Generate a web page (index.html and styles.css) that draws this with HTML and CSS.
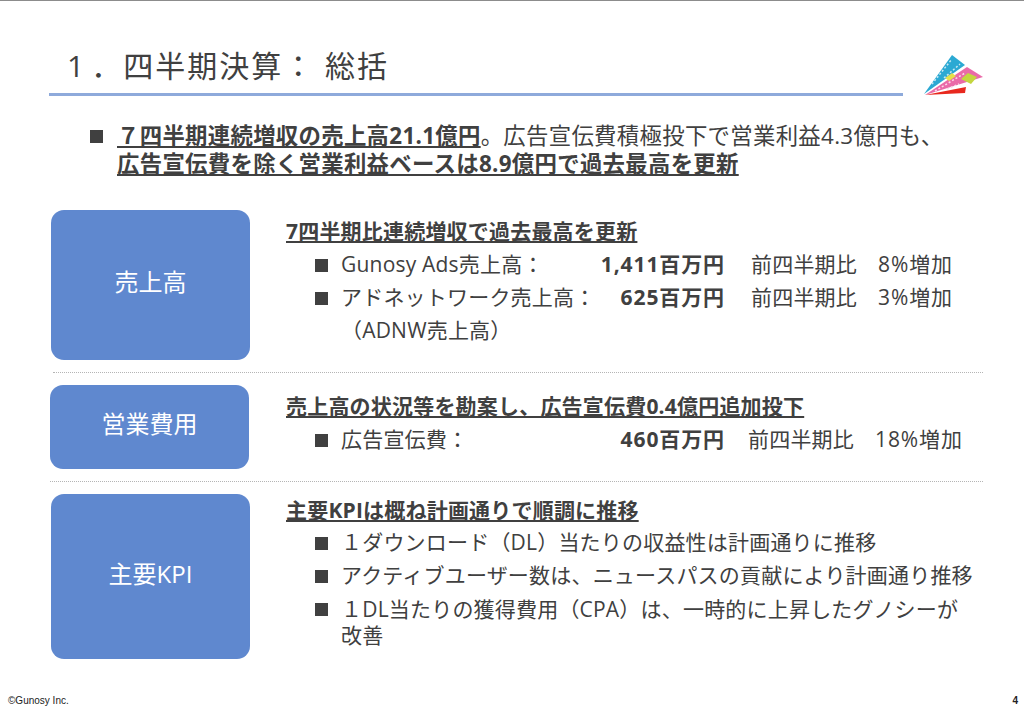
FILE: index.html
```html
<!DOCTYPE html>
<html lang="ja">
<head>
<meta charset="utf-8">
<title>四半期決算</title>
<link rel="stylesheet" href="styles.css">
</head>
<body>
<div class="slide">
  <header class="head">
    <h1 class="title"><span class="num">1</span>．四半期決算： 総括</h1>
    <svg class="logo" width="64" height="44" viewBox="0 0 64 44">
      <polygon points="1,40 29,1 42,11" fill="#2ba9d3"/>
      <polygon points="2,41 44,13 60,23" fill="#ea6aa8"/>
      <polygon points="2,41 43,33 42,39" fill="#e8281e"/>
      <polygon points="22,24 29,19 33,22 26,27" fill="#e6e04a"/>
      <polygon points="38,25 45,19 54,23 48,30" fill="#c4d63f"/>
      <path d="M9,30 L29,5 M21,24 L37,10" stroke="#c9e8f3" stroke-width="1.5" stroke-dasharray="2 2" fill="none"/>
      <path d="M12,37 L42,19 M24,35 L36,30" stroke="#fbdcea" stroke-width="1.5" stroke-dasharray="2 2" fill="none"/>
    </svg>
  </header>
  <div class="rule"></div>

  <div class="lead">
    <span class="sq"></span>
    <p class="lead-text"><span class="strong">７四半期連続増収の売上高21.1億円</span>。広告宣伝費積極投下で営業利益4.3億円も、<br><span class="strong">広告宣伝費を除く営業利益ベースは8.9億円で過去最高を更新</span></p>
  </div>

  <section class="row row-a">
    <div class="box box-a">売上高</div>
    <div class="body">
      <h2 class="sub">7四半期比連続増収で過去最高を更新</h2>
      <div class="item metric">
        <span class="sq"></span><span class="name">Gunosy Ads売上高：</span><b class="val">1,411百万円</b><span class="cmp">前四半期比</span><span class="pct">8%増加</span>
      </div>
      <div class="item metric">
        <span class="sq"></span><span class="name">アドネットワーク売上高：</span><b class="val">625百万円</b><span class="cmp">前四半期比</span><span class="pct">3%増加</span>
      </div>
      <div class="item cont">（ADNW売上高）</div>
    </div>
  </section>
  <div class="sep sep-a"></div>

  <section class="row row-b">
    <div class="box box-b">営業費用</div>
    <div class="body">
      <h2 class="sub">売上高の状況等を勘案し、広告宣伝費0.4億円追加投下</h2>
      <div class="item metric metric-b">
        <span class="sq"></span><span class="name">広告宣伝費：</span><b class="val">460百万円</b><span class="cmp">前四半期比</span><span class="pct">18%増加</span>
      </div>
    </div>
  </section>
  <div class="sep"></div>

  <section class="row row-c">
    <div class="box box-c">主要KPI</div>
    <div class="body">
      <h2 class="sub">主要KPIは概ね計画通りで順調に推移</h2>
      <div class="item"><span class="sq"></span><span>１ダウンロード（DL）当たりの収益性は計画通りに推移</span></div>
      <div class="item"><span class="sq"></span><span>アクティブユーザー数は、ニュースパスの貢献により計画通り推移</span></div>
      <div class="item"><span class="sq"></span><span class="wrap-text">１DL当たりの獲得費用（CPA）は、一時的に上昇したグノシーが<br>改善</span></div>
    </div>
  </section>

  <footer class="foot"><span>©Gunosy Inc.</span><b>4</b></footer>
</div>
</body>
</html>
```
FILE: styles.css
```css
* { box-sizing: border-box; }
html, body { margin: 0; padding: 0; background: #fff; }
body {
  width: 1024px;
  height: 712px;
  overflow: hidden;
  font-family: "Open Sans", "Noto Sans CJK JP", sans-serif;
  color: #404040;
}
.slide {
  width: 1024px;
  height: 712px;
  border-top: 1px solid #8c8c8c;
  display: flex;
  flex-direction: column;
}
.head {
  height: 92px;
  padding: 41px 37px 0 67px;
  display: flex;
  justify-content: space-between;
  align-items: flex-start;
}
.title {
  margin: 0;
  font-size: 30px;
  line-height: 48px;
  font-weight: 400;
  letter-spacing: 2px;
}
.num { margin-right: 5px; }
.logo { margin-top: 12px; flex: none; }
.rule {
  width: 854px;
  height: 3px;
  margin-left: 49px;
  background: #8eaadb;
}
.lead {
  margin: 26px 0 0 90px;
  display: flex;
  align-items: flex-start;
  gap: 14px;
  height: 88px;
}
.sq {
  width: 13px;
  height: 13px;
  background: #404040;
  flex: none;
  margin-top: 8px;
}
.lead-text {
  margin: 0;
  font-size: 22.4px;
  line-height: 28px;
  letter-spacing: 0.3px;
  white-space: nowrap;
}
.strong {
  font-weight: 700;
  text-decoration: underline;
}
.row { display: flex; align-items: flex-start; }
.box {
  flex: none;
  width: 199px;
  background: #5f88cf;
  color: #fff;
  border-radius: 13px;
  display: flex;
  align-items: center;
  justify-content: center;
  font-size: 24px;
  padding-bottom: 9px;
}
.row-a { height: 150px; padding-left: 51px; }
.box-a { height: 150px; }
.row-b { height: 84px; padding-left: 50px; margin-top: 12px; }
.box-b { height: 84px; }
.row-c { height: 165px; padding-left: 51px; margin-top: 12px; }
.box-c { height: 165px; }
.body { padding-left: 36px; flex: 1; }
.row-b .body { padding-left: 37px; }
.sub {
  margin: 4px 0 0;
  font-size: 21px;
  line-height: 34px;
  font-weight: 700;
  letter-spacing: 0.2px;
  text-decoration: underline;
  white-space: nowrap;
}
.row-c .sub { margin-top: 0; line-height: 32px; }
.item {
  display: flex;
  font-size: 21px;
  line-height: 33px;
  letter-spacing: 0.2px;
  padding-left: 29px;
  white-space: nowrap;
}
.item .sq { margin-top: 11px; margin-right: 13px; }
.metric .name { flex: none; width: 258px; }
.metric .val { flex: none; width: 126px; text-align: right; font-size: 21px; letter-spacing: 0.9px; }
.metric .cmp { flex: none; margin-left: 26px; width: 127px; }
.metric .pct { letter-spacing: 0.9px; }
.metric-b .cmp { margin-left: 23px; }
.cont { padding-left: 55px; }
.wrap-text { line-height: 26px; display: block; padding-top: 4px; }
.sep {
  height: 1px;
  margin: 12px 41px 0 50px;
  border-top: 1px dotted #b5b5b5;
}
.sep-a { margin-left: 53px; }
.foot {
  margin-top: auto;
  height: 18px;
  padding: 0 6px 0 8px;
  display: flex;
  justify-content: space-between;
  font-family: "Liberation Sans", sans-serif;
  font-size: 10px;
  line-height: 14px;
  color: #222;
}
```
